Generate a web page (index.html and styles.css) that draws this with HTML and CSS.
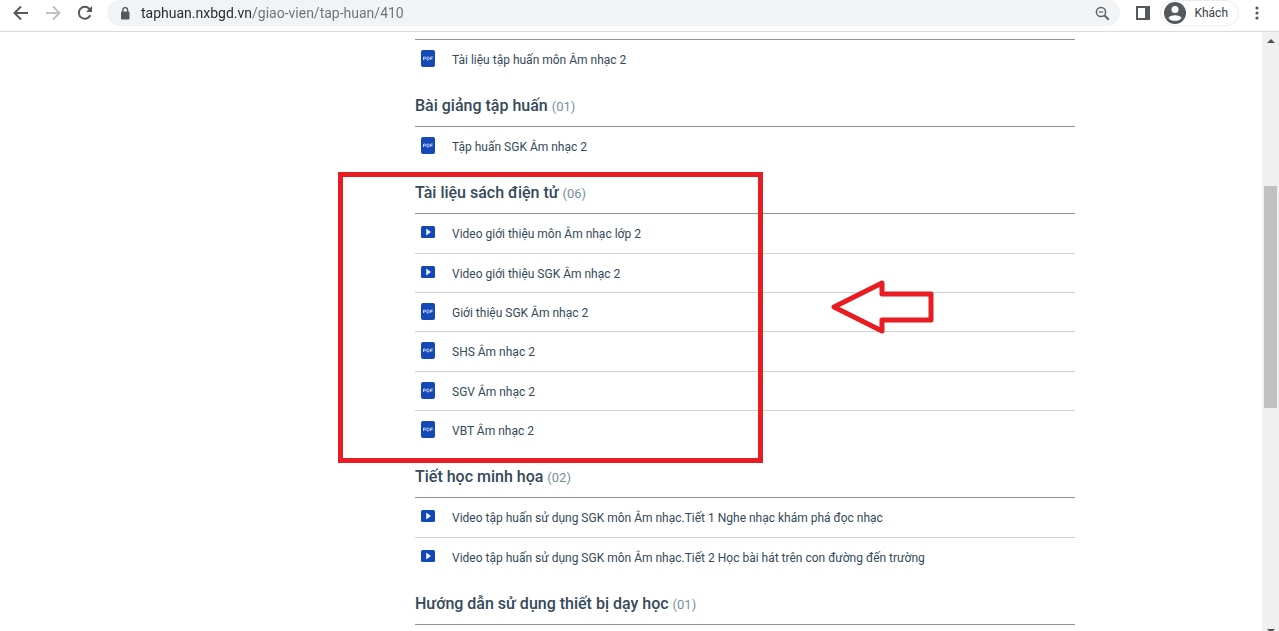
FILE: index.html
```html
<!DOCTYPE html>
<html lang="vi">
<head>
<meta charset="utf-8">
<meta name="viewport" content="width=device-width, initial-scale=1">
<title>Tập huấn Âm nhạc 2</title>
<link rel="stylesheet" href="styles.css">
</head>
<body>
<svg class="defs" aria-hidden="true">
  <symbol id="pdf" viewBox="0 0 14 17">
    <rect width="14" height="17" rx="2" fill="#1549b8"/>
    <path d="M2.500 10V7h1.300a.9.9 0 0 1 0 1.800H2.500M6 7v3h.7a1.500 1.500 0 0 0 0-3zM9.600 10V7h2.200M9.600 8.600h1.900" fill="none" stroke="#c9d8fa" stroke-width=".9"/>
  </symbol>
  <symbol id="video" viewBox="0 0 14 12">
    <rect width="14" height="12" rx="1.500" fill="#1247b9"/>
    <path d="M5.500 3v6L9.500 6z" fill="#fff" stroke="#fff" stroke-width=".5"/>
  </symbol>
</svg>
<header class="toolbar">
  <nav class="nav">
    <button class="icon-btn" aria-label="Back"><svg width="16" height="16" viewBox="0 0 16 16"><path d="M15 8H2M8 1.500 1.500 8 8 14.500" fill="none" stroke="#55595e" stroke-width="2"/></svg></button>
    <button class="icon-btn" aria-label="Forward"><svg width="16" height="16" viewBox="0 0 16 16"><path d="M1 8h13M8 1.500 14.500 8 8 14.500" fill="none" stroke="#bdbfc1" stroke-width="2"/></svg></button>
    <button class="icon-btn" aria-label="Reload"><svg width="16" height="16" viewBox="0 0 16 16"><path d="M13.300 10.300A6 6 0 1 1 12.400 3.800L14 5.500" fill="none" stroke="#55595e" stroke-width="2"/><path d="M15 1v6H9z" fill="#55595e"/></svg></button>
  </nav>
  <div class="omnibox">
    <svg width="10" height="13" viewBox="0 0 10 13"><rect x="1" y="4.500" width="8.500" height="8" rx="1" fill="#55595e"/><path d="M2.800 5V3a2.400 2.400 0 0 1 4.800 0v2" fill="none" stroke="#55595e" stroke-width="1.400"/></svg>
    <input class="url" type="text" aria-label="Address" value="taphuan.nxbgd.vn/giao-vien/tap-huan/410">
    <button class="icon-btn" aria-label="Zoom"><svg width="15" height="15" viewBox="0 0 15 15"><circle cx="6" cy="6" r="4.600" fill="none" stroke="#5f6368" stroke-width="1.500"/><path d="m9.500 9.500 4.300 4.300" stroke="#5f6368" stroke-width="2"/><path d="M3.800 6h4.400" stroke="#5f6368" stroke-width="1.200"/></svg></button>
  </div>
  <button class="icon-btn panel" aria-label="Side panel"><svg width="14" height="14" viewBox="0 0 14 14"><rect x="1" y="1" width="12" height="12" fill="#fff" stroke="#55595e" stroke-width="2"/><path d="M9 1h4v12H9z" fill="#55595e"/></svg></button>
  <button class="profile"><svg width="22" height="22" viewBox="0 0 22 22"><circle cx="11" cy="11" r="11" fill="#55595e"/><circle cx="11" cy="7.500" r="3.500" fill="#fff"/><path d="M4.500 16c1.200-3.800 11.800-3.800 13 0-2.600 3.800-10.400 3.800-13 0z" fill="#fff"/></svg>Khách</button>
  <button class="icon-btn menu" aria-label="Menu"><svg width="4" height="14" viewBox="0 0 4 14" fill="#55595e"><circle cx="2" cy="2" r="1.600"/><circle cx="2" cy="7" r="1.600"/><circle cx="2" cy="12" r="1.600"/></svg></button>
</header>
<div class="viewport">
  <main class="content">
    <section class="group">
      <ul class="files">
        <li><a href="#"><svg class="pdf"><use href="#pdf"/></svg>Tài liệu tập huấn môn Âm nhạc 2</a></li>
      </ul>
    </section>
    <section class="group">
      <h2>Bài giảng tập huấn <span class="count">(01)</span></h2>
      <ul class="files">
        <li><a href="#"><svg class="pdf"><use href="#pdf"/></svg>Tập huấn SGK Âm nhạc 2</a></li>
      </ul>
    </section>
    <section class="group">
      <h2>Tài liệu sách điện tử <span class="count">(06)</span></h2>
      <ul class="files">
        <li><a href="#"><svg class="video"><use href="#video"/></svg>Video giới thiệu môn Âm nhạc lớp 2</a></li>
        <li><a href="#"><svg class="video"><use href="#video"/></svg>Video giới thiệu SGK Âm nhạc 2</a></li>
        <li><a href="#"><svg class="pdf"><use href="#pdf"/></svg>Giới thiệu SGK Âm nhạc 2</a></li>
        <li><a href="#"><svg class="pdf"><use href="#pdf"/></svg>SHS Âm nhạc 2</a></li>
        <li><a href="#"><svg class="pdf"><use href="#pdf"/></svg>SGV Âm nhạc 2</a></li>
        <li><a href="#"><svg class="pdf"><use href="#pdf"/></svg>VBT Âm nhạc 2</a></li>
      </ul>
      <div class="frame"></div>
      <svg class="arrow" viewBox="0 0 104 54"><path d="M3 27 51 3v11h49v26H51v11z" fill="#fff" stroke="#e81c23" stroke-width="5" stroke-linejoin="round"/></svg>
    </section>
    <section class="group">
      <h2>Tiết học minh họa <span class="count">(02)</span></h2>
      <ul class="files">
        <li><a href="#"><svg class="video"><use href="#video"/></svg>Video tập huấn sử dụng SGK môn Âm nhạc.Tiết 1 Nghe nhạc khám phá đọc nhạc</a></li>
        <li><a href="#"><svg class="video"><use href="#video"/></svg>Video tập huấn sử dụng SGK môn Âm nhạc.Tiết 2 Học bài hát trên con đường đến trường</a></li>
      </ul>
    </section>
    <section class="group">
      <h2>Hướng dẫn sử dụng thiết bị dạy học <span class="count">(01)</span></h2>
      <ul class="files"></ul>
    </section>
  </main>
  <div class="scrollbar" aria-hidden="true">
    <span class="up"></span>
    <span class="thumb"></span>
    <span class="down"></span>
  </div>
</div>
</body>
</html>
```
FILE: styles.css
```css
* { box-sizing: border-box; }
body {
  margin: 0;
  height: 100vh;
  display: flex;
  flex-direction: column;
  overflow: hidden;
  background: #fff;
  color: #34495a;
  font-family: Roboto, "Noto Sans", sans-serif;
}
button { border: 0; padding: 0; background: none; font: inherit; color: inherit; }
svg { display: block; flex: none; }
.defs { position: absolute; width: 0; height: 0; }

.toolbar {
  flex: none;
  display: flex;
  align-items: center;
  height: 32px;
  padding: 0 20px 5px 13px;
  border-bottom: 1px solid #d8dadc;
}
.nav { display: flex; gap: 16px; }
.icon-btn { display: flex; }
.omnibox {
  flex: 1;
  display: flex;
  align-items: center;
  height: 26px;
  margin-left: 14px;
  padding: 0 10px 0 13px;
  border-radius: 13px;
  background: #f1f3f4;
}
.url {
  flex: 1;
  min-width: 0;
  margin-left: 11px;
  padding: 0;
  border: 0;
  font: 14px/20px Roboto, "Noto Sans", sans-serif;
  color: transparent;
  background: linear-gradient(to right, #26282b 110px, #6d7175 110px);
  -webkit-background-clip: text;
  background-clip: text;
}
.panel { margin-left: 16px; }
.profile {
  display: flex;
  align-items: center;
  gap: 8px;
  height: 26px;
  margin: 0 16px 0 10px;
  padding: 0 10px 0 3px;
  border: 1px solid #eceded;
  border-radius: 13px;
  font-size: 12px;
  color: #3c4043;
}

.viewport { flex: 1; min-height: 0; display: flex; }
.content { flex: 1; padding: 7px 187px 0 415px; }
.group { position: relative; }
h2 {
  margin: 0;
  height: 47px;
  padding-top: 15px;
  font-size: 16px;
  line-height: 24px;
  font-weight: 500;
  white-space: nowrap;
}
.count { font-size: 13px; font-weight: 400; color: #78909c; }
.files { margin: 0; padding: 0; list-style: none; border-top: 1px solid #8f9193; }
.files li { height: 39px; }
.files li:nth-child(3n+1), .files li:last-child { height: 40px; }
.files li:first-child, .files li:only-child { height: 39px; }
.files li + li { border-top: 1px solid #cfd1d2; }
.files a {
  display: flex;
  align-items: center;
  height: 38px;
  padding: 2px 0 0 6px;
  gap: 17px;
  font-size: 12px;
  line-height: 20px;
  color: inherit;
  text-decoration: none;
  white-space: nowrap;
}
.pdf { width: 14px; height: 17px; margin-bottom: 4px; }
.video { width: 14px; height: 12px; margin-bottom: 5px; }

.frame {
  position: absolute;
  top: 6px;
  left: -77px;
  width: 425px;
  height: 291px;
  border: 5px solid #e81c23;
}
.arrow { position: absolute; top: 114px; left: 416px; width: 104px; height: 54px; }

.scrollbar {
  display: flex;
  flex-direction: column;
  align-items: center;
  width: 17px;
  background: #f0f0f0;
}
.up, .down { border: 4px solid transparent; }
.up { margin-top: 3px; border-bottom-color: #505050; }
.thumb { width: 13px; height: 37%; margin: 143px 0 auto; background: #c1c1c1; }
.down { border-top-color: #505050; margin-bottom: -6px; }
```
